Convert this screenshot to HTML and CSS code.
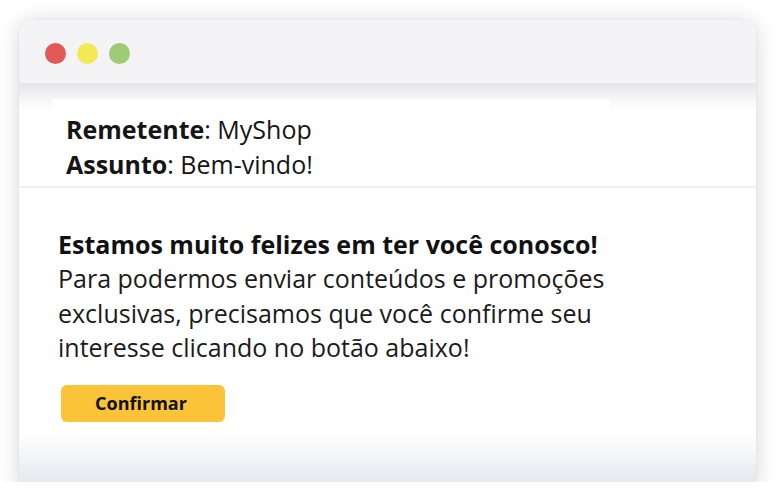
FILE: index.html
```html
<!DOCTYPE html>
<html lang="pt-BR">
<head>
<meta charset="utf-8">
<title>Email</title>
<link rel="stylesheet" href="styles.css">
</head>
<body>
<div class="stage">
  <div class="window">
    <div class="titlebar">
      <span class="dot red"></span>
      <span class="dot yellow"></span>
      <span class="dot green"></span>
    </div>
    <div class="header">
      <div class="header-box">
        <div class="line"><b>Remetente</b>: MyShop</div>
        <div class="line"><b>Assunto</b>: Bem-vindo!</div>
      </div>
    </div>
    <div class="content">
      <p class="message"><b>Estamos muito felizes em ter você conosco!</b><br>Para podermos enviar conteúdos e promoções exclusivas, precisamos que você confirme seu interesse clicando no botão abaixo!</p>
      <button class="confirm">Confirmar</button>
    </div>
  </div>
</div>
</body>
</html>
```
FILE: styles.css
```css
html, body {
  margin: 0;
  padding: 0;
  background: #ffffff;
}
body {
  font-family: "Open Sans", "DejaVu Sans", sans-serif;
  color: #1b1b1b;
}
.stage {
  height: 482px;
  overflow: hidden;
  padding: 20px 0 0 19px;
  box-sizing: border-box;
}
.window {
  width: 737px;
  height: 470px;
  border-radius: 12px 12px 0 0;
  background: #ffffff;
  box-shadow: 0 2px 22px rgba(0, 0, 0, 0.16), 0 0 2px rgba(0, 0, 0, 0.08);
  display: flex;
  flex-direction: column;
}
.titlebar {
  height: 63px;
  flex: none;
  background: #f4f4f6;
  border-radius: 12px 12px 0 0;
  display: flex;
  align-items: flex-start;
  gap: 11px;
  padding: 23px 0 0 26px;
  box-sizing: border-box;
}
.dot {
  width: 21px;
  height: 21px;
  border-radius: 50%;
}
.red { background: #e25a57; }
.yellow { background: #f3e957; }
.green { background: #9dcb76; }
.header {
  flex: none;
  background: linear-gradient(to bottom, #e6e6e8 0px, #f6f6f7 16px, #ffffff 28px);
  padding: 16px 0 0 33px;
  border-bottom: 2px solid #f0f0f2;
}
.header-box {
  width: 558px;
  background: #ffffff;
  padding: 13px 0 4px 14px;
  box-sizing: border-box;
}
.line {
  font-size: 25px;
  line-height: 35px;
  color: #151515;
}
.line b { font-weight: 700; }
.content {
  flex: 1;
  padding: 39px 0 0 39px;
  background: linear-gradient(to bottom, #ffffff 0, #ffffff 246px, #e7e9ef 292px);
}
.message {
  margin: 0;
  width: 620px;
  font-size: 25px;
  line-height: 34.4px;
  color: #1b1b1b;
}
.message b { font-weight: 700; color: #111; }
.confirm {
  margin: 20px 0 0 3px;
  width: 164px;
  height: 37px;
  border: none;
  border-radius: 6px;
  background: #fbc338;
  font-family: "Open Sans", "DejaVu Sans", sans-serif;
  font-weight: 700;
  font-size: 18px;
  color: #111;
  padding: 0 4px 0 0;
  display: block;
}
```
